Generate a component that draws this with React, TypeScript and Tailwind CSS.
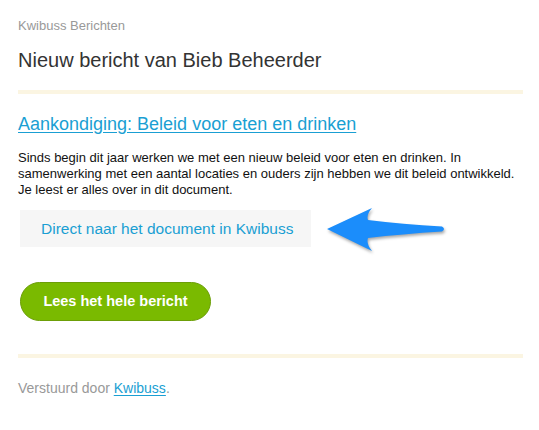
function Arrow() {
  return (
    <svg
      width="130"
      height="60"
      viewBox="0 0 130 60"
      className="absolute left-[320px] top-[200px] drop-shadow-[1px_2px_1.5px_rgba(0,0,0,0.35)]"
    >
      <path
        d="M7 29 L52 8 Q46 15 48 20 Q82 24 122 26.5 Q126 29 122 31.5 Q82 34 48 38 Q46 44 52 51 Z"
        fill="#1b8dfb"
      />
    </svg>
  );
}

export default function App() {
  return (
    <div className="relative min-h-[430px] w-[539px] bg-white font-['Liberation_Sans',Arial,sans-serif]">
      <div className="pl-[18px] pr-[16px] pt-[18px]">
        <p className="text-[13px] leading-[16px] text-[#999999]">Kwibuss Berichten</p>
        <h1 className="mt-[14px] text-[20px] leading-[24px] text-[#333333]">
          Nieuw bericht van Bieb Beheerder
        </h1>
        <div className="mt-[18px] h-[4px] bg-[#fbf5e2]" />

        <a href="#" className="mt-[19px] block text-[18px] leading-[22px] text-[#1a9fd3] underline underline-offset-2">
          Aankondiging: Beleid voor eten en drinken
        </a>
        <p className="mt-[15px] text-[13px] leading-[16px] text-[#111111]">
          Sinds begin dit jaar werken we met een nieuw beleid voor eten en drinken. In samenwerking met een aantal
          locaties en ouders zijn hebben we dit beleid ontwikkeld. Je leest er alles over in dit document.
        </p>

        <a
          href="#"
          className="ml-[2px] mt-[12px] flex h-[37px] w-[291px] items-center bg-[#f6f6f6] pl-[21px] text-[15.5px] text-[#1a9fd3]"
        >
          Direct naar het document in Kwibuss
        </a>

        <button className="ml-[2px] mt-[35px] flex h-[39px] w-[191px] items-center justify-center rounded-full border border-[#6c9e08] bg-[#7aba00] text-[14.5px] font-bold text-white">
          Lees het hele bericht
        </button>

        <div className="mt-[33px] h-[4px] bg-[#fbf5e2]" />

        <p className="mt-[22px] text-[14px] leading-[16px] text-[#999999]">
          Verstuurd door{' '}
          <a href="#" className="text-[#1a9fd3] underline underline-offset-2">
            Kwibuss
          </a>
          .
        </p>
      </div>
      <Arrow />
    </div>
  );
}
